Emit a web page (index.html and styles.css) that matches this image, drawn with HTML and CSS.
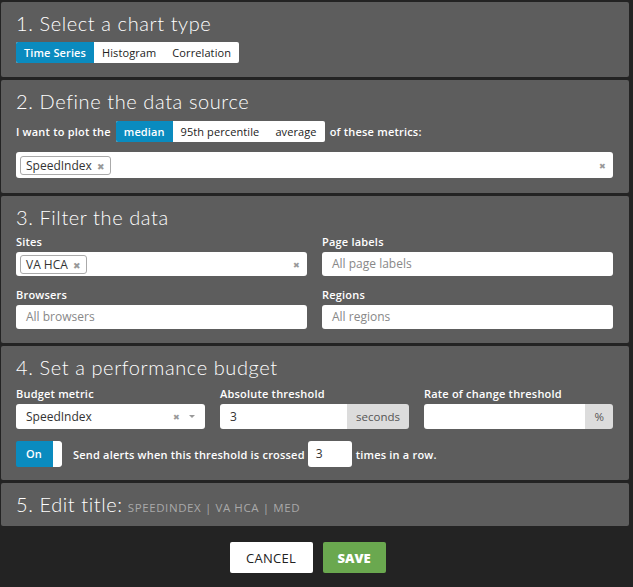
FILE: index.html
```html
<!DOCTYPE html>
<html>
<head>
<meta charset="utf-8">
<link rel="stylesheet" href="styles.css">
</head>
<body>
<div class="wrap">
  <section class="panel p1">
    <h2 class="title">1. Select a chart type</h2>
    <div class="seg">
      <span class="seg-item active">Time Series</span>
      <span class="seg-item">Histogram</span>
      <span class="seg-item">Correlation</span>
    </div>
  </section>

  <section class="panel p2">
    <h2 class="title">2. Define the data source</h2>
    <div class="plot-row">
      <span class="txt">I want to plot the</span>
      <div class="seg">
        <span class="seg-item active">median</span>
        <span class="seg-item">95th percentile</span>
        <span class="seg-item">average</span>
      </div>
      <span class="txt">of these metrics:</span>
    </div>
    <div class="multi tall">
      <span class="tag">SpeedIndex <span class="tag-x">✖</span></span>
      <span class="clear">✖</span>
    </div>
  </section>

  <section class="panel p3">
    <h2 class="title">3. Filter the data</h2>
    <div class="grid2">
      <div class="field">
        <label class="lbl">Sites</label>
        <div class="multi">
          <span class="tag">VA HCA <span class="tag-x">✖</span></span>
          <span class="clear">✖</span>
        </div>
      </div>
      <div class="field">
        <label class="lbl">Page labels</label>
        <div class="input ph">All page labels</div>
      </div>
      <div class="field">
        <label class="lbl">Browsers</label>
        <div class="input ph">All browsers</div>
      </div>
      <div class="field">
        <label class="lbl">Regions</label>
        <div class="input ph">All regions</div>
      </div>
    </div>
  </section>

  <section class="panel p4">
    <h2 class="title">4. Set a performance budget</h2>
    <div class="grid3">
      <div class="field">
        <label class="lbl">Budget metric</label>
        <div class="input select">
          <span>SpeedIndex</span>
          <span class="sel-icons"><span class="sel-x">✖</span><span class="caret"></span></span>
        </div>
      </div>
      <div class="field">
        <label class="lbl">Absolute threshold</label>
        <div class="group">
          <div class="input grow">3</div>
          <span class="addon">seconds</span>
        </div>
      </div>
      <div class="field">
        <label class="lbl">Rate of change threshold</label>
        <div class="group">
          <div class="input grow"></div>
          <span class="addon pct">%</span>
        </div>
      </div>
    </div>
    <div class="alert-row">
      <div class="toggle"><span class="on">On</span><span class="knob"></span></div>
      <span class="txt alert-txt">Send alerts when this threshold is crossed</span>
      <div class="input small">3</div>
      <span class="txt">times in a row.</span>
    </div>
  </section>

  <section class="panel p5">
    <h2 class="title">5. Edit title:<span class="sub">SPEEDINDEX | VA HCA | MED</span></h2>
  </section>

  <div class="actions">
    <button class="btn cancel">CANCEL</button>
    <button class="btn save">SAVE</button>
  </div>
</div>
</body>
</html>
```

FILE: styles.css
```css
* { box-sizing: border-box; }
html, body { margin: 0; padding: 0; }
body {
  background: #232323;
  font-family: "Open Sans", "Liberation Sans", sans-serif;
  color: #fff;
  width: 633px;
  height: 587px;
  overflow: hidden;
}
.wrap {
  padding: 2px 4px 0 1px;
}
.panel {
  background: #5d5d5d;
  border-radius: 2px;
  padding: 9px 16px 14px 15px;
  margin-bottom: 3px;
}
.title {
  margin: 0;
  font-family: "Lato", "Open Sans", sans-serif;
  font-size: 20px;
  font-weight: 300;
  line-height: 24px;
  color: #fff;
  letter-spacing: 0.6px;
}
.p1 { height: 75px; }
.p2 { height: 113px; }
.p3 { height: 147px; }
.p4 { height: 134px; margin-bottom: 3px; }
.p5 { height: 43px; }

.seg {
  display: inline-flex;
  background: #fff;
  border-radius: 2px;
  height: 21px;
  overflow: hidden;
}
.p1 .seg { margin-top: 7px; }
.seg-item {
  font-size: 11px;
  font-weight: 500;
  color: #222;
  line-height: 21px;
  padding: 0 8px;
  letter-spacing: 0.1px;
}
.seg-item.active { background: #0a8bbf; color: #fff; font-weight: 600; }

.plot-row {
  display: flex;
  align-items: center;
  margin-top: 8px;
  gap: 4px;
}
.plot-row .seg { margin: 0 1px; }
.txt { font-size: 11px; font-weight: 600; color: #fff; letter-spacing: 0.2px; }

.multi {
  position: relative;
  background: #fff;
  border-radius: 3px;
  height: 24px;
  display: flex;
  align-items: center;
  padding-left: 4px;
}
.multi.tall { height: 26px; margin-top: 10px; }
.tag {
  border: 1px solid #aaa;
  border-radius: 3px;
  color: #333;
  font-size: 12px;
  font-weight: 500;
  height: 19px;
  line-height: 17px;
  padding: 0 5px 0 5px;
}
.tag-x { color: #999; font-size: 9px; margin-left: 2px; }
.clear {
  position: absolute;
  right: 7px;
  top: 50%;
  transform: translateY(-50%);
  color: #999;
  font-size: 8px;
}

.grid2 {
  display: grid;
  grid-template-columns: 1fr 1fr;
  column-gap: 15px;
  row-gap: 12px;
  margin-top: 6px;
}
.grid3 {
  display: grid;
  grid-template-columns: 1fr 1fr 1fr;
  column-gap: 15px;
  margin-top: 8px;
}
.field { display: flex; flex-direction: column; }
.lbl {
  font-size: 11px;
  font-weight: 600;
  line-height: 14px;
  margin-bottom: 3px;
  color: #fff;
  letter-spacing: 0.2px;
}
.input {
  background: #fff;
  border-radius: 3px;
  height: 24px;
  line-height: 24px;
  font-size: 12px;
  color: #333;
  padding: 0 10px;
}
.p4 .input { height: 25px; line-height: 25px; }
.ph { color: #888; }
.select {
  display: flex;
  justify-content: space-between;
  align-items: center;
}
.sel-icons { display: flex; align-items: center; gap: 9px; }
.sel-x { color: #999; font-size: 8px; }
.caret {
  width: 0; height: 0;
  border-left: 3px solid transparent;
  border-right: 3px solid transparent;
  border-top: 3px solid #999;
}
.group { display: flex; }
.group .grow { flex: 1; border-radius: 3px 0 0 3px; }
.addon {
  background: #dcdcdc;
  color: #555;
  font-size: 11.5px;
  height: 25px;
  line-height: 25px;
  padding: 0 9px;
  border-radius: 0 3px 3px 0;
}
.addon.pct { padding: 0 9px; }

.alert-row {
  display: flex;
  align-items: center;
  margin-top: 12px;
  height: 26px;
}
.toggle {
  display: flex;
  height: 26px;
  border-radius: 2px;
  overflow: hidden;
}
.toggle .on {
  background: #0a8bbf;
  color: #fff;
  font-size: 11px;
  font-weight: 600;
  width: 37px;
  line-height: 26px;
  padding-left: 10px;
}
.toggle .knob { background: #fff; width: 9px; border-radius: 0 3px 3px 0; }
.alert-txt { margin-left: 11px; }
.input.small { width: 44px; height: 26px; line-height: 26px; margin: 0 4px 0 3px; padding: 0 8px; }

.sub {
  font-family: "Open Sans", sans-serif;
  font-size: 11.5px;
  font-weight: 500;
  color: #a9a9a9;
  letter-spacing: 0.6px;
  margin-left: 5px;
}

.actions {
  display: flex;
  justify-content: center;
  gap: 10px;
  margin-top: 16px;
  padding-right: 15px;
}
.btn {
  border: none;
  border-radius: 2px;
  height: 31px;
  font-family: inherit;
  font-size: 13px;
  cursor: pointer;
}
.cancel { background: #fff; color: #222; width: 83px; font-weight: 400; letter-spacing: 0.3px; }
.save { background: #6aa84f; color: #fff; width: 63px; font-weight: 800; }
```
